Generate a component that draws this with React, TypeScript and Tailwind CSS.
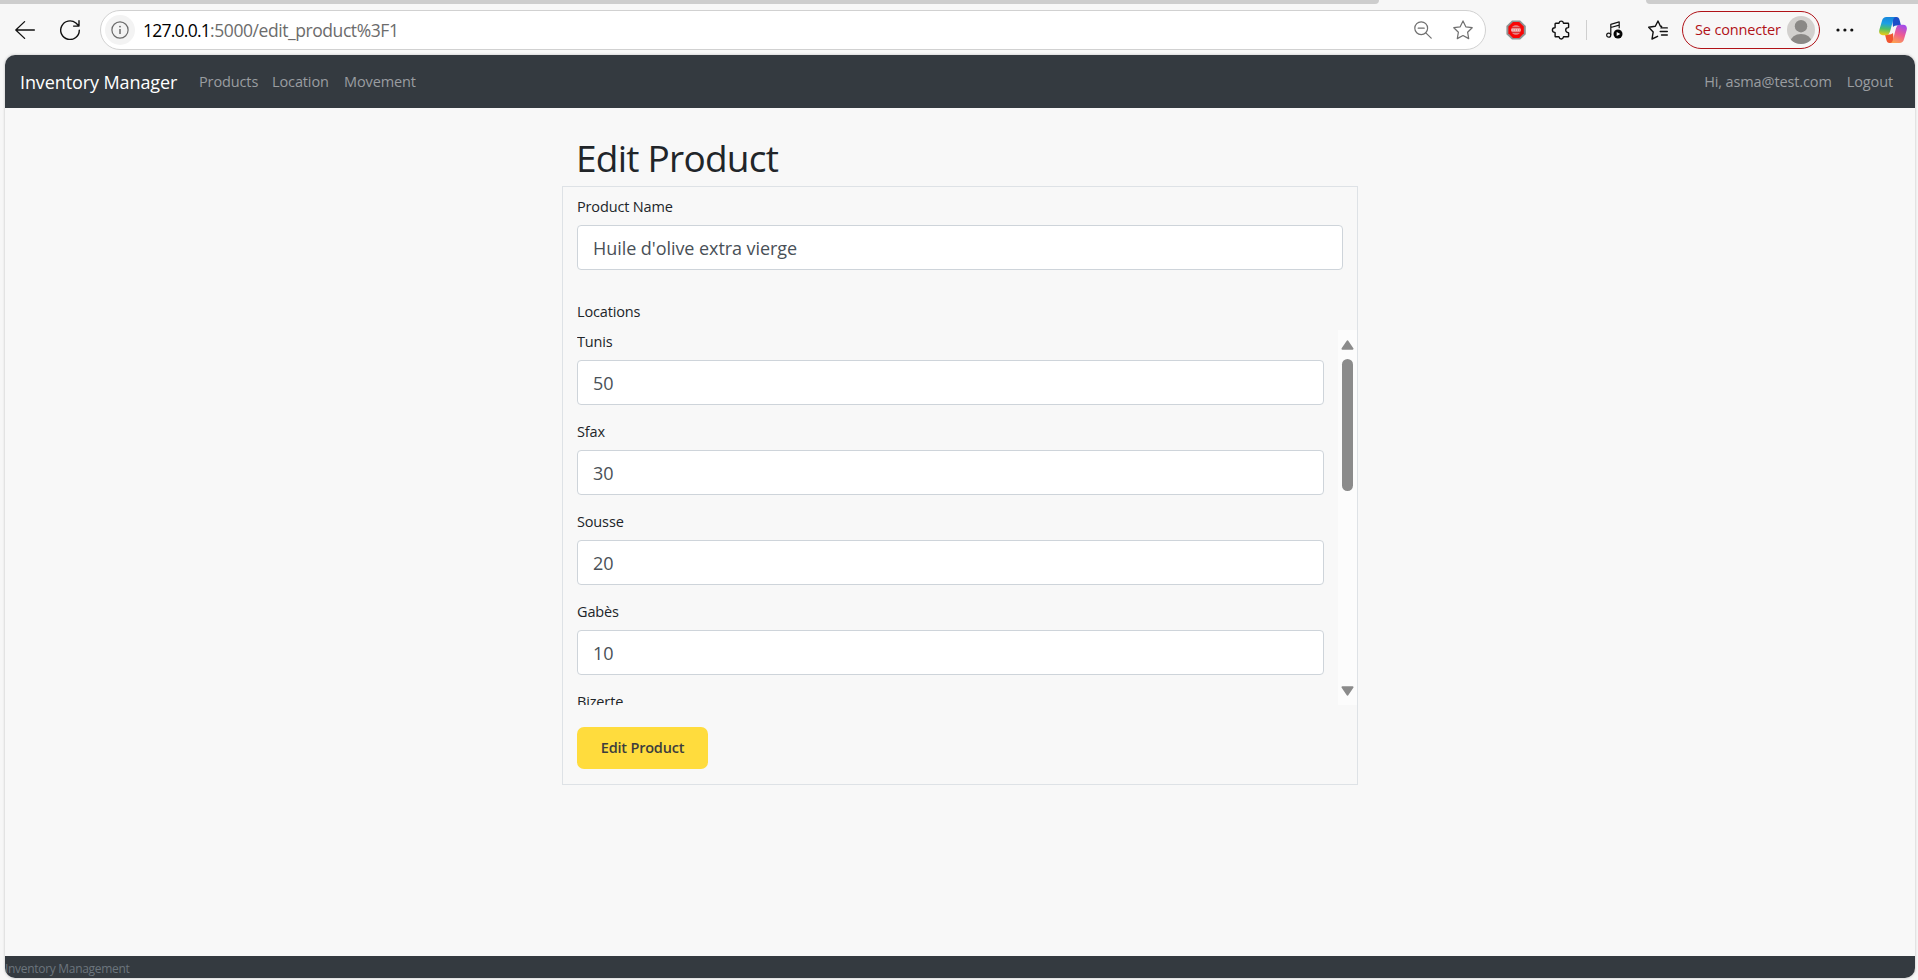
const locations = [
  { name: "Tunis", quantity: 50 },
  { name: "Sfax", quantity: 30 },
  { name: "Sousse", quantity: 20 },
  { name: "Gabès", quantity: 10 },
  { name: "Bizerte", quantity: 15 },
];

function BackIcon() {
  return (
    <svg className="size-5 shrink-0" viewBox="0 0 20 20" fill="none" stroke="#111" strokeWidth="1.3" strokeLinecap="round" strokeLinejoin="round">
      <path d="M19.4 10H.8M9.6 1.6.8 10l8.8 8.4" />
    </svg>
  );
}

function ReloadIcon() {
  return (
    <svg className="ml-[25px] size-5 shrink-0" viewBox="0 0 20 20" fill="none" stroke="#111" strokeWidth="1.4" strokeLinecap="round" strokeLinejoin="round">
      <path d="M19.3 10.2A9.3 9.3 0 1 1 15.9 3l2.6 2.6M19 .8v5.3h-5.4" />
    </svg>
  );
}

function InfoIcon() {
  return (
    <svg className="size-[18px]" viewBox="0 0 18 18" fill="none" stroke="#6b6b6b" strokeWidth="1.2">
      <circle cx="9" cy="9" r="8.1" />
      <path d="M9 8v5" strokeWidth="1.5" />
      <circle cx="9" cy="5.6" r=".9" fill="#6b6b6b" stroke="none" />
    </svg>
  );
}

function ZoomOutIcon() {
  return (
    <svg className="size-[18px] shrink-0" viewBox="0 0 18 18" fill="none" stroke="#707070" strokeWidth="1.2" strokeLinecap="round">
      <circle cx="7.2" cy="7.2" r="6.4" />
      <path d="M4.2 7.2h6M11.8 11.8l5.4 5.4" />
    </svg>
  );
}

function StarIcon() {
  return (
    <svg className="ml-[21px] size-5 shrink-0" viewBox="0 0 20 20" fill="none" stroke="#707070" strokeWidth="1.2" strokeLinejoin="round">
      <path d="m10 .9 2.8 5.9 6.4.9-4.6 4.5 1.1 6.4L10 15.5l-5.7 3.1 1.1-6.4L.8 7.7l6.4-.9z" />
    </svg>
  );
}

function BlockerIcon() {
  return (
    <svg className="ml-5 size-5 shrink-0" viewBox="0 0 20 20">
      <path d="M6 .4h8.2L19.8 6v8.2L14.2 19.6H6L.4 14.2V6z" fill="#8e9292" />
      <path d="M7 2h6.200l4.600 4.600v6.600l-4.600 4.700H7l-4.600-4.700V6.600z" fill="#f90606" />
      <circle cx="10" cy="10" r="4.800" fill="#e98a8a" />
      <path d="M5.6 7.4h8.8M5.6 12.6h8.8" stroke="#d41414" strokeWidth=".8" />
      <path d="M5.3 10h9.4" stroke="#fff" strokeWidth="1.2" strokeDasharray="1.4 .8" />
    </svg>
  );
}

function PuzzleIcon() {
  return (
    <svg className="ml-[25px] mr-px size-5 shrink-0" viewBox="0 0 20 20" fill="none" stroke="#111" strokeWidth="1.4" strokeLinejoin="round">
      <path d="M4.7 3.3h3.1c.2 0 .3-.1.3-.4a2.2 2.2 0 0 1 4.3 0c0 .3.1.4.3.4H17c.4 0 .6.2.6.6v3.3c0 .3-.1.4-.4.4a2.5 2.5 0 0 0 0 5c.3 0 .4.1.4.4v3.2c0 .4-.2.6-.6.6h-4.3c-.2 0-.3.1-.3.4a2.2 2.2 0 0 1-4.3 0c0-.3-.1-.4-.3-.4H4.700c-.4 0-.6-.2-.6-.6v-3.400c0-.3-.1-.4-.4-.4a2.300 2.300 0 0 1 0-4.600c.3 0 .4-.1.4-.4V3.900c0-.4.2-.6.6-.6z" />
    </svg>
  );
}

function MusicIcon() {
  return (
    <svg className="ml-[19px] size-[18px] shrink-0" viewBox="0 0 18 18" fill="none">
      <circle cx="2.700" cy="14.200" r="2" stroke="#111" strokeWidth="1.200" />
      <path d="M4.800 14.200V3.300L13.200.9v6.300M4.800 6.500l8.400-2.400" stroke="#111" strokeWidth="1.200" strokeLinejoin="round" />
      <circle cx="12" cy="13" r="4.500" fill="#050505" />
      <path d="m10.700 10.900 3.600 2.100-3.600 2.100z" fill="#fff" />
    </svg>
  );
}

function FavoritesIcon() {
  return (
    <svg className="ml-6 size-5 shrink-0" viewBox="0 0 20 20" fill="none" stroke="#111" strokeWidth="1.400" strokeLinecap="round" strokeLinejoin="round">
      <path d="M13.600 6.500 12.300 6 10 1 7.300 6.300.7 7.200l4.500 4.700L4 19l5.600-2.700M13 7.900h6.300M12.200 11.500h7.100M13.500 15h5.800" />
    </svg>
  );
}

function Avatar() {
  return (
    <svg className="size-[28px] shrink-0" viewBox="0 0 28 28">
      <clipPath id="avatar-clip"><circle cx="14" cy="14" r="14" /></clipPath>
      <g clipPath="url(#avatar-clip)">
        <rect width="28" height="28" fill="#d2d0ce" />
        <circle cx="14" cy="10.200" r="6.200" fill="#8a8886" />
        <ellipse cx="14" cy="26" rx="10.500" ry="8" fill="#8a8886" />
      </g>
    </svg>
  );
}

function DotsIcon() {
  return (
    <svg className="ml-4 h-1 w-[18px] shrink-0" viewBox="0 0 18 4" fill="#111">
      <circle cx="2" cy="2" r="1.600" />
      <circle cx="8.900" cy="2" r="1.600" />
      <circle cx="15.800" cy="2" r="1.600" />
    </svg>
  );
}

function CopilotIcon() {
  return (
    <svg className="ml-[25px] h-[26px] w-7 shrink-0" viewBox="0 0 28 26">
      <defs>
        <linearGradient id="cp-left" x1=".4" y1="0" x2=".3" y2="1">
          <stop offset="0" stopColor="#1787dc" />
          <stop offset=".35" stopColor="#1c9fe6" />
          <stop offset=".65" stopColor="#4fbf67" />
          <stop offset="1" stopColor="#f1cb13" />
        </linearGradient>
        <linearGradient id="cp-right" x1=".7" y1="0" x2=".3" y2="1">
          <stop offset="0" stopColor="#a44bea" />
          <stop offset=".5" stopColor="#ee5b93" />
          <stop offset="1" stopColor="#fda150" />
        </linearGradient>
      </defs>
      <path d="M13 0h4.500c1.800 0 2.600 1.200 3.100 3L22 8.500h-3.500c-2 0-3.200 0-4.500 1.500z" fill="#1c4fc8" />
      <path d="M15 26h-4.500c-1.800 0-2.600-1.200-3.100-3L6 17.500h3.500c2 0 3.200 0 4.500-1.500z" fill="#f0552f" />
      <path d="M7.500 0H17c-1.800 0-2.500 1.500-3 3.500L11.200 14c-.8 2.700-1.800 4.200-4.300 4.200H3.800C.8 18.200-.4 16 .3 13L3 3.800C3.800 1.200 5 0 7.500 0z" fill="url(#cp-left)" />
      <path d="M20.500 26H11c1.800 0 2.500-1.500 3-3.500L16.800 12c.8-2.700 1.800-4.200 4.300-4.200h3.100c3 0 4.200 2.200 3.500 5.200L25 22.200c-.8 2.600-2 3.800-4.500 3.800z" fill="url(#cp-right)" />
    </svg>
  );
}

function BrowserChrome() {
  return (
    <header className="shrink-0 bg-[#f7f7f7]">
      <div className="flex h-1 justify-between">
        <div className="w-[1379px] rounded-br-lg bg-[#cdcdcd]" />
        <div className="w-[272px] rounded-bl-lg bg-[#cdcdcd]" />
      </div>
      <div className="flex h-[51px] items-center pl-[15px]">
        <BackIcon />
        <ReloadIcon />
        <div className="ml-5 flex h-10 w-[1386px] shrink-0 items-center rounded-full border border-[#d1d1d1] bg-white pl-1 pr-3">
          <div className="flex size-[30px] items-center justify-center rounded-full bg-[#f3f3f3]">
            <InfoIcon />
          </div>
          <div className="ml-2 flex-1 whitespace-nowrap text-[17.5px] leading-6">
            <span className="tracking-[-0.75px] text-black">127.0.0.1</span>
            <span className="tracking-[-0.43px] text-[#6c6c6c]">:5000/edit_product%3F1</span>
          </div>
          <ZoomOutIcon />
          <StarIcon />
        </div>
        <BlockerIcon />
        <PuzzleIcon />
        <div className="ml-[14px] h-5 w-px bg-[#cfcfcf]" />
        <MusicIcon />
        <FavoritesIcon />
        <div className="ml-[14px] flex h-[38px] w-[138px] shrink-0 items-center justify-between rounded-full border border-[#b01218] pl-3 pr-1">
          <span className="whitespace-nowrap text-[14.5px] leading-5 tracking-[-0.15px] text-[#b01218]">Se connecter</span>
          <Avatar />
        </div>
        <DotsIcon />
        <CopilotIcon />
      </div>
    </header>
  );
}

function Navbar() {
  return (
    <nav className="flex h-[53px] shrink-0 items-center bg-[#343a40] pl-[15px] pr-[22px] text-[14.5px] leading-6 tracking-[-0.12px] text-[#9a9da0]">
      <a className="w-[179px] text-[18px] tracking-[-0.1px] text-white">Inventory Manager</a>
      <a className="w-[73px]">Products</a>
      <a className="w-[72px]">Location</a>
      <a>Movement</a>
      <a className="ml-auto">Hi, asma@test.com</a>
      <a className="ml-[15px]">Logout</a>
    </nav>
  );
}

function Field({ label, value }: { label: string; value: string | number }) {
  return (
    <label className="block shrink-0">
      <span className="block h-[22px] text-[14.5px] leading-[23px] tracking-[-0.15px]">{label}</span>
      <input
        className="mt-2 block h-[45px] w-full rounded-[4px] border border-[#ced4da] bg-white px-[15px] text-[18px] tracking-[-0.06px] text-[#495057] outline-none"
        defaultValue={value}
      />
    </label>
  );
}

function Scrollbar() {
  return (
    <div className="flex w-[19px] shrink-0 flex-col items-center bg-[#fcfcfc] pb-[9px] pt-[10px]">
      <svg className="h-[10px] w-[13px]" viewBox="0 0 13 10">
        <path d="M6.500 1.200 11.600 8.800H1.400z" fill="#8b8b8b" stroke="#8b8b8b" strokeWidth="1.800" strokeLinejoin="round" />
      </svg>
      <div className="mt-[9px] h-[132px] w-[11px] rounded-full bg-[#8b8b8b]" />
      <svg className="mt-auto h-[10px] w-[13px]" viewBox="0 0 13 10">
        <path d="M6.500 8.800 11.600 1.200H1.400z" fill="#8b8b8b" stroke="#8b8b8b" strokeWidth="1.800" strokeLinejoin="round" />
      </svg>
    </div>
  );
}

export default function App() {
  return (
    <div className="flex h-[980px] w-[1918px] flex-col overflow-hidden bg-[#f7f7f7] font-['Open_Sans',sans-serif] text-[#212529]">
      <BrowserChrome />
      <div className="ml-[5px] flex h-[923px] w-[1910px] flex-col overflow-hidden rounded-[10px] bg-[#f8f8f8] shadow-[0_0_2px_1px_#dcdcdc]">
        <Navbar />
        <main className="mx-auto w-[796px] flex-1 pt-[28px]">
          <h1 className="h-[45px] pl-[14px] text-[37px] leading-[44px] tracking-[-0.75px]">Edit Product</h1>
          <form className="mt-[5px] h-[599px] border border-[#dee2e6] pl-[14px] pt-2">
            <div className="w-[766px]">
              <Field label="Product Name" value="Huile d'olive extra vierge" />
            </div>
            <p className="mt-[30px] h-[22px] text-[14.5px] leading-[23px] tracking-[-0.15px]">Locations</p>
            <div className="mt-2 flex h-[375px] overflow-hidden">
              <div className="mr-[14px] flex w-[747px] flex-col gap-[15px] overflow-hidden">
                {locations.map((location) => (
                  <Field key={location.name} label={location.name} value={location.quantity} />
                ))}
              </div>
              <Scrollbar />
            </div>
            <button type="button" className="mt-[22px] flex h-[42px] w-[131px] items-center justify-center rounded-[7px] bg-[#ffdc3d] text-[14.5px] font-semibold tracking-[-0.2px] text-[#3d3d3d]">
              Edit Product
            </button>
          </form>
        </main>
        <footer className="h-[22px] shrink-0 bg-[#343a40] pt-1 text-[12px] leading-[17px] tracking-[-0.3px] text-[#6c757d]">
          Inventory Management
        </footer>
      </div>
    </div>
  );
}
